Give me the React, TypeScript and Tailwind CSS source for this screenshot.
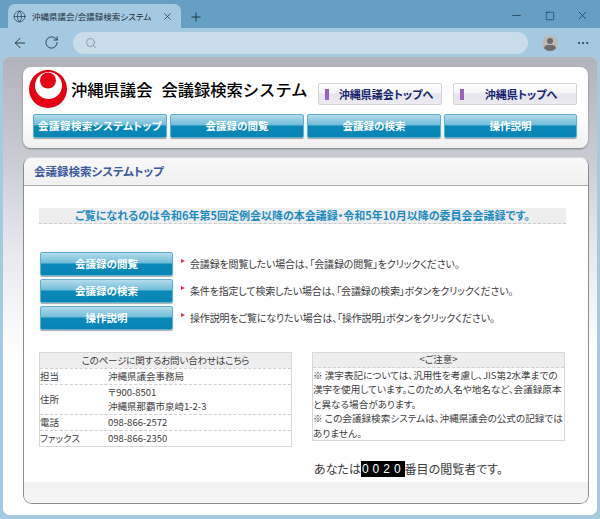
import { ArrowLeft, Globe, Minus, MoreHorizontal, Plus, RotateCw, Search, Square, X } from 'lucide-react';

function NavButton({ label, className = '' }: { label: string; className?: string }) {
  return (
    <div
      className={`flex h-[24px] items-center justify-center whitespace-nowrap rounded-[2px] border border-[#5fb0cf] bg-[linear-gradient(#b4dcec_0%,#70bcd8_45%,#0a88b8_50%,#0786b6_100%)] text-[10.5px] font-bold leading-none text-white shadow-[0_1px_1px_#0005] ${className}`}
    >
      {label}
    </div>
  );
}

function TopLink({ label, className = '' }: { label: string; className?: string }) {
  return (
    <div className={`relative flex h-[22px] w-[124px] items-center justify-center whitespace-nowrap rounded-[2px] border border-[#d4d4d8] bg-[linear-gradient(#fff_0%,#f6f6f8_45%,#e6e4ec_50%,#ecebf0_100%)] pl-[11px] text-[11px] font-bold leading-none text-[#14246e] ${className}`}>
      <span className="absolute left-[6px] top-[5px] h-[11px] w-[4px] bg-[#9a5fc8]" />
      {label}
    </div>
  );
}

function GuideRow({ label, text }: { label: string; text: string }) {
  return (
    <div className="flex h-[24px] items-center">
      <NavButton label={label} className="w-[133px]" />
      <span className="mb-[6px] ml-[8px] h-0 w-0 border-y-[2.5px] border-l-[4px] border-y-transparent border-l-[#e0304a]" />
      <span className="ml-[5px] whitespace-nowrap text-[10px] leading-none tracking-[-0.17px] text-[#3c3c3c]">{text}</span>
    </div>
  );
}

function ContactRow({ name, children }: { name: string; children: React.ReactNode }) {
  return (
    <div className="flex items-center border-t border-dashed border-[#d0d0d0]">
      <div className="w-[68px]">{name}</div>
      <div>{children}</div>
    </div>
  );
}

export default function App() {
  return (
    <div className="flex h-[519px] w-[600px] flex-col overflow-hidden bg-[#a5c9e1] font-['Noto_Sans_CJK_JP',sans-serif] text-[#3c3c3c] [font-feature-settings:'palt']">
      {/* ブラウザの枠 */}
      <div className="flex h-[28px] items-end bg-[#659fc3] pl-[8px]">
        <div className="flex h-[24px] w-[173px] items-center rounded-t-[7px] bg-[#a5c9e1] pl-[5px] pr-[6px]">
          <Globe size={13} strokeWidth={1.3} className="shrink-0 text-[#1f3a4d]" />
          <span className="ml-[6px] flex-1 whitespace-nowrap text-[8.5px] leading-none text-[#1e2f3b]">沖縄県議会/会議録検索システム</span>
          <X size={11} strokeWidth={1.6} className="mr-[2px] shrink-0 text-[#1e2f3b]" />
        </div>
        <Plus size={14} strokeWidth={1.4} className="mb-[4px] ml-[8px] text-[#10293a]" />
        <div className="mb-[6px] ml-auto flex items-center gap-[21.5px] pr-[11px] text-[#10293a]">
          <Minus size={13} strokeWidth={1.2} />
          <Square size={10} strokeWidth={1.4} />
          <X size={13} strokeWidth={1.2} />
        </div>
      </div>
      <div className="flex h-[29px] items-center pl-[12px] pr-[9px]">
        <ArrowLeft size={16} strokeWidth={1.4} className="text-[#1e2f3b]" />
        <RotateCw size={15} strokeWidth={1.4} className="ml-[16px] text-[#1e2f3b]" />
        <div className="ml-[14px] flex h-[22px] w-[455px] items-center rounded-full bg-[#c9dcea] pl-[12px]">
          <Search size={12} strokeWidth={1.3} className="text-[#6b7f8d]" />
        </div>
        <div className="relative ml-[14px] h-[16px] w-[16px] overflow-hidden rounded-full bg-[#bdb9b6]">
          <span className="absolute left-[5px] top-[3px] h-[6px] w-[6px] rounded-full bg-[#6e6c6a]" />
          <span className="absolute left-[2px] top-[10px] h-[8px] w-[12px] rounded-full bg-[#6e6c6a]" />
        </div>
        <MoreHorizontal size={14} strokeWidth={1.5} className="ml-[18px] text-[#1e2f3b]" />
      </div>

      {/* ページ */}
      <div className="mx-[3px] mb-[4px] flex-1 rounded-b-[7px] rounded-t-[6px] bg-[#eef0f2]">
        <div className="h-full rounded-[inherit] bg-[linear-gradient(#b0b3ba_0px,#c8ccd2_100px,#e8eaee_200px,#fff_300px,#fff_100%)] px-[20px] pt-[10px]">
          <div className="relative h-[81px] w-[565px] rounded-[8px] bg-[linear-gradient(#fff_0%,#fff_60%,#f0f0f0_100%)] shadow-[0_1px_2px_#0006]">
            <div className="flex h-[45px] items-start pl-[6px] pt-[3px]">
              <svg width="38" height="38" viewBox="0 0 38 38" className="shrink-0">
                <circle cx="19" cy="19" r="19" fill="#e60012" />
                <circle cx="19.5" cy="15.5" r="13.5" fill="#fff" />
                <circle cx="19" cy="10.5" r="8" fill="#e60012" />
              </svg>
              <h1 className="ml-[4px] mt-[8px] whitespace-nowrap text-[16.3px] font-medium leading-[22px] text-black [font-feature-settings:normal]">
                沖縄県議会<span className="ml-[9px]">会議録検索システム</span>
              </h1>
              <div className="ml-[11px] mt-[13px] flex gap-[11px]">
                <TopLink label="沖縄県議会トップへ" />
                <TopLink label="沖縄県トップへ" />
              </div>
            </div>
            <div className="ml-[10px] mt-[2px] flex gap-[3px]">
              <NavButton label="会議録検索システムトップ" className="w-[134px] tracking-[0.45px]" />
              <NavButton label="会議録の閲覧" className="w-[134px]" />
              <NavButton label="会議録の検索" className="w-[134px]" />
              <NavButton label="操作説明" className="w-[133px]" />
            </div>
          </div>

          <div className="mt-[9px] h-[347px] w-[566px] overflow-hidden rounded-[9px] border border-[#8c8c8c] border-t-[#d8d8d8] bg-white">
            <div className="flex h-[28px] items-center border-b border-[#aaa] bg-[linear-gradient(#f9f9f9,#f0f0f0)] pl-[10px] text-[11.5px] font-bold leading-none text-[#3d5a9c]">
              会議録検索システムトップ
            </div>
            <div className="relative h-[318px] bg-[linear-gradient(#fff_0%,#fff_93%,#f1f1f1_93%,#f6f6f6_100%)] px-[15px] pt-[22px]">
              <div className="flex h-[16px] w-[527px] items-center justify-center whitespace-nowrap border-b border-dashed border-[#ccc] bg-[#eeeeee] text-[11px] font-bold leading-none text-[#1f8cc0]">
                ご覧になれるのは令和6年第5回定例会以降の本会議録・令和5年10月以降の委員会会議録です。
              </div>

              <div className="ml-[1px] mt-[28px] flex flex-col gap-[3px]">
                <GuideRow label="会議録の閲覧" text="会議録を閲覧したい場合は、「会議録の閲覧」をクリックください。" />
                <GuideRow label="会議録の検索" text="条件を指定して検索したい場合は、「会議録の検索」ボタンをクリックください。" />
                <GuideRow label="操作説明" text="操作説明をご覧になりたい場合は、「操作説明」ボタンをクリックください。" />
              </div>

              <div className="mt-[22px] flex items-start gap-[20px] text-[9.5px] leading-none">
                <div className="w-[253px] border border-[#d8d8d8]">
                  <div className="flex h-[15px] items-center justify-center bg-[#eeeeee] tracking-[-0.2px]">このページに関するお問い合わせはこちら</div>
                  <ContactRow name="担当"><div className="flex h-[15px] items-center">沖縄県議会事務局</div></ContactRow>
                  <ContactRow name="住所">
                    <div className="flex h-[15px] items-center">〒900-8501</div>
                    <div className="flex h-[14px] items-center">沖縄県那覇市泉崎1-2-3</div>
                  </ContactRow>
                  <ContactRow name="電話"><div className="flex h-[15px] items-center">098-866-2572</div></ContactRow>
                  <ContactRow name="ファックス"><div className="flex h-[15px] items-center">098-866-2350</div></ContactRow>
                </div>
                <div>
                  <div className="w-[253px] border border-[#d8d8d8]">
                    <div className="flex h-[15px] items-center justify-center border-b border-dashed border-[#d0d0d0] bg-[#eeeeee]">&lt;ご注意&gt;</div>
                    <p className="text-[9.6px] leading-[14.4px]">
                      ※ 漢字表記については、汎用性を考慮し、JIS第2水準までの
                      <br />
                      漢字を使用しています。このため人名や地名など、会議録原本
                      <br />
                      と異なる場合があります。
                      <br />
                      ※ この会議録検索システムは、沖縄県議会の公式の記録では
                      <br />
                      ありません。
                    </p>
                  </div>
                  <div className="ml-[2px] mt-[20px] flex h-[16px] items-center whitespace-nowrap text-[12px] leading-none">
                    あなたは
                    <span className="flex h-[16px] items-center bg-black pl-[1px] font-['Liberation_Sans',sans-serif] text-[12px] tracking-[4px] text-white">0020</span>
                    番目の閲覧者です。
                  </div>
                </div>
              </div>
            </div>
          </div>
        </div>
      </div>
    </div>
  );
}
